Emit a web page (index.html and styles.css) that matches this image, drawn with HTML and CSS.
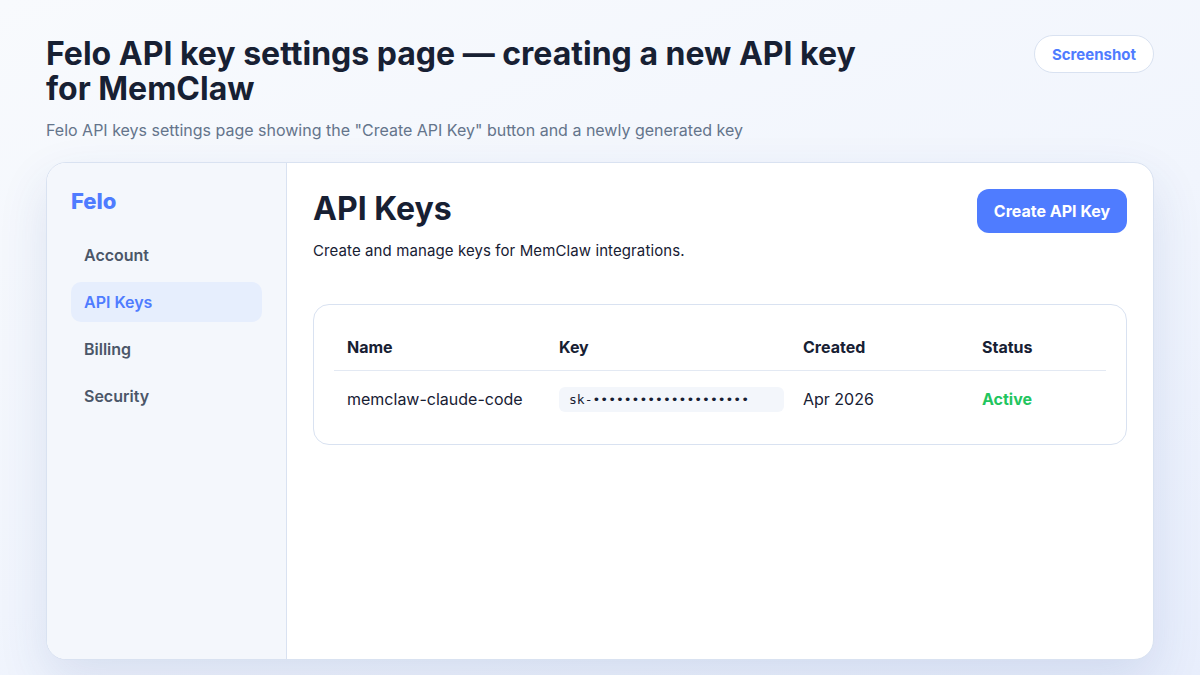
FILE: index.html
```html
<!DOCTYPE html>
<html>
<head>
    <meta charset="UTF-8">
    <title>Felo API Keys</title>
    <link rel="stylesheet" href="styles.css">
</head>
<body>
    <div class="page-head">
        <div>
            <h1 class="page-title">Felo API key settings page — creating a new API key for MemClaw</h1>
            <p class="page-sub">Felo API keys settings page showing the "Create API Key" button and a newly generated key</p>
        </div>
        <button class="shot-btn">Screenshot</button>
    </div>

    <div class="frame">
        <div class="sidebar">
            <div class="brand">Felo</div>
            <div class="nav-item">Account</div>
            <div class="nav-item active">API Keys</div>
            <div class="nav-item">Billing</div>
            <div class="nav-item">Security</div>
        </div>

        <div class="main">
            <div class="main-head">
                <div>
                    <h2 class="main-title">API Keys</h2>
                    <p class="main-desc">Create and manage keys for MemClaw integrations.</p>
                </div>
                <button class="create-btn">Create API Key</button>
            </div>

            <div class="keys-card">
                <div class="keys-row keys-header">
                    <div class="cell">Name</div>
                    <div class="cell">Key</div>
                    <div class="cell">Created</div>
                    <div class="cell">Status</div>
                </div>
                <div class="keys-row keys-body">
                    <div class="cell">memclaw-claude-code</div>
                    <div class="cell"><span class="key-pill">sk-••••••••••••••••••••</span></div>
                    <div class="cell">Apr 2026</div>
                    <div class="cell status-active">Active</div>
                </div>
            </div>
        </div>
    </div>
</body>
</html>
```

FILE: styles.css
```css
body {
  margin: 0;
  height: 675px;
  overflow: hidden;
  padding: 36px 46px 0 46px;
  box-sizing: border-box;
  font-family: Inter, "Noto Sans", sans-serif;
  color: #172033;
  background: linear-gradient(160deg, #f8fafd 0%, #f1f5fd 55%, #e8eefc 100%);
}

.page-head {
  display: flex;
  justify-content: space-between;
  align-items: flex-start;
}

.page-title {
  margin: 0;
  max-width: 830px;
  font-size: 32px;
  line-height: 35px;
  font-weight: 700;
  color: #172033;
}

.page-sub {
  margin: 15px 0 0;
  font-size: 16px;
  line-height: 19px;
  color: #64748b;
}

.shot-btn {
  margin-top: -1px;
  height: 38px;
  padding: 0 17px;
  border: 1px solid #d9e2f1;
  border-radius: 19px;
  background: #fff;
  color: #4f7cff;
  font-family: Inter, sans-serif;
  font-size: 15px;
  font-weight: 700;
}

.frame {
  margin-top: 22px;
  height: 498px;
  display: flex;
  background: #fff;
  border: 1px solid #d9e2f1;
  border-radius: 20px;
  overflow: hidden;
  box-sizing: border-box;
  box-shadow: 0 20px 50px rgba(40, 70, 150, 0.12);
}

.sidebar {
  width: 240px;
  flex-shrink: 0;
  box-sizing: border-box;
  padding: 25px 24px;
  background: #f4f7fc;
  border-right: 1px solid #d9e2f1;
}

.brand {
  font-size: 22px;
  font-weight: 800;
  color: #4f7cff;
  margin-bottom: 21px;
}

.nav-item {
  height: 40px;
  line-height: 40px;
  padding: 0 13px;
  margin-bottom: 7px;
  border-radius: 10px;
  font-size: 16px;
  font-weight: 600;
  color: #4b5668;
}

.nav-item.active {
  background: #e6eefd;
  color: #4f7cff;
}

.main {
  flex: 1;
  padding: 25px 26px;
}

.main-head {
  display: flex;
  justify-content: space-between;
  align-items: flex-start;
}

.main-title {
  margin: 2px 0 0;
  font-size: 32px;
  line-height: 38px;
  font-weight: 700;
  color: #172033;
}

.main-desc {
  margin: 13px 0 0;
  font-size: 15px;
  letter-spacing: 0.1px;
  color: #172033;
}

.create-btn {
  margin-top: 1px;
  height: 44px;
  width: 150px;
  border: none;
  border-radius: 12px;
  background: #4f7cff;
  color: #fff;
  font-family: Inter, sans-serif;
  font-size: 16px;
  font-weight: 700;
}

.keys-card {
  margin-top: 44px;
  border: 1px solid #d9e2f1;
  border-radius: 16px;
  padding: 20px;
}

.keys-row {
  display: grid;
  grid-template-columns: 212px 244px 179px 1fr;
  align-items: center;
}

.keys-header {
  border-bottom: 1px solid #e3e9f3;
}

.cell {
  padding: 13px;
  font-size: 16px;
  line-height: 19px;
}

.keys-header .cell {
  font-weight: 700;
}

.keys-body .cell {
  padding: 16px 13px 12px;
}

.key-pill {
  display: block;
  width: 225px;
  box-sizing: border-box;
  padding: 4px 10px;
  border-radius: 6px;
  background: #f3f6fb;
  font-family: "DejaVu Sans Mono", monospace;
  font-size: 13px;
  line-height: 17px;
  color: #172033;
}

.status-active {
  color: #22c55e;
  font-weight: 700;
}
```
